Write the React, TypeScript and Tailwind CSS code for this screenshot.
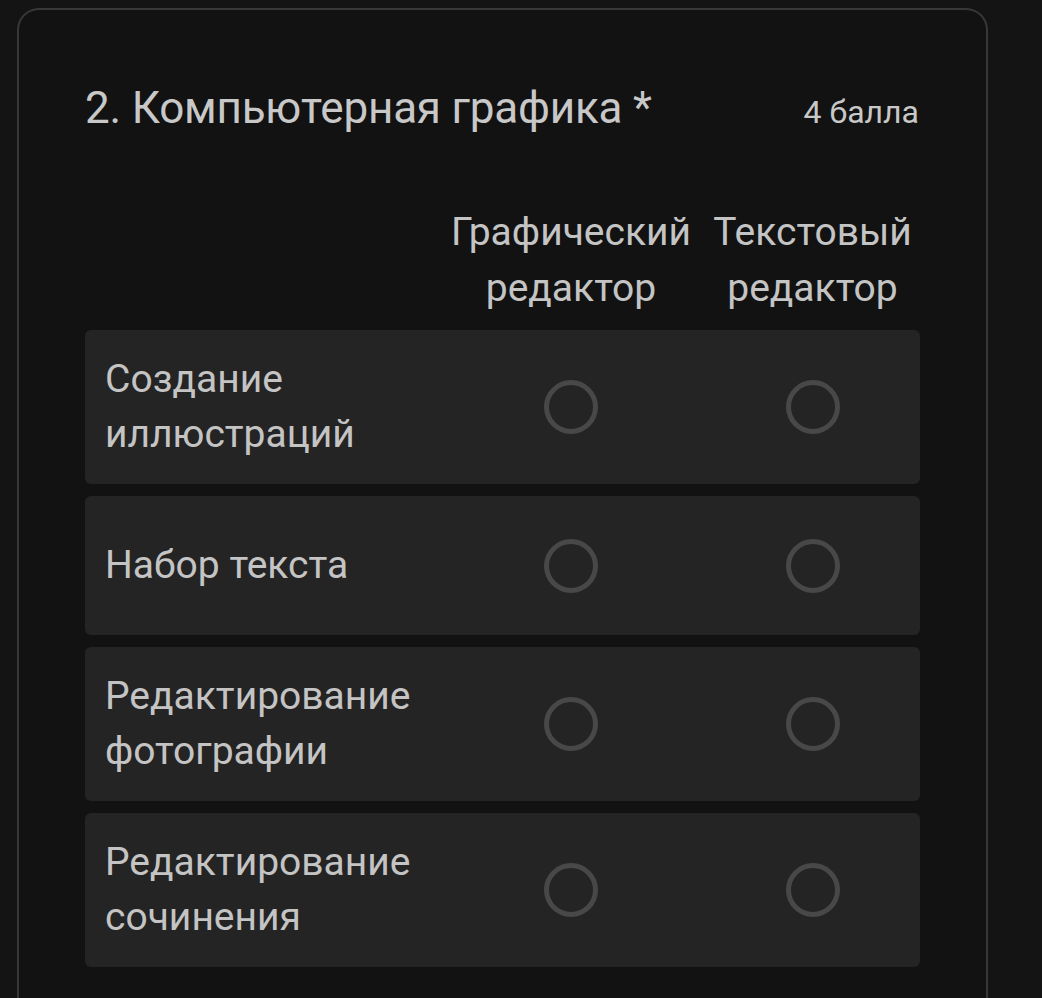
import { ReactNode } from "react";

const rows = [
  "Создание иллюстраций",
  "Набор текста",
  "Редактирование фотографии",
  "Редактирование сочинения",
];

function Radio() {
  return (
    <span className="block w-[54px] h-[54px] rounded-full border-[5px] border-[#484848]" />
  );
}

function Cell({ children, last }: { children: ReactNode; last?: boolean }) {
  return (
    <div className={`flex justify-center ${last ? "pl-3" : ""}`}>{children}</div>
  );
}

export default function App() {
  return (
    <div
      className="min-h-[998px] bg-[#141414] pt-2 px-[17px] overflow-hidden"
      style={{ fontFamily: "Roboto, 'Noto Sans', sans-serif" }}
    >
      <div className="w-[971px] min-h-[1000px] rounded-t-[22px] border-2 border-b-0 border-[#383838] bg-[#121212] pl-[66px] pr-[65px] pt-[70px]">
        {/* Title */}
        <div className="flex items-baseline justify-between">
          <h2 className="text-[44px] leading-[56px] text-[#c8c8c8] tracking-[-0.2px]">
            2. Компьютерная графика *
          </h2>
          <span className="text-[32px] text-[#c8c8c8] pr-[2px]">4 балла</span>
        </div>

        {/* Column headers */}
        <div className="mt-[68px] grid grid-cols-[365px_242px_229px] text-[39px] leading-[56px] text-[#c4c4c4] text-center">
          <div />
          <div className="whitespace-nowrap">
            Графический
            <br />
            редактор
          </div>
          <div className="pl-3 whitespace-nowrap">
            Текстовый
            <br />
            редактор
          </div>
        </div>

        {/* Rows */}
        <div className="mt-[14px] flex flex-col gap-3 w-[835px]">
          {rows.map((r) => (
            <div
              key={r}
              className="grid grid-cols-[365px_242px_229px] items-center rounded-md bg-[#242424] min-h-[139px] py-[22px]"
            >
              <div className="pl-5 pr-4 text-[39px] leading-[55px] text-[#c4c4c4]">{r}</div>
              <Cell>
                <Radio />
              </Cell>
              <Cell last>
                <Radio />
              </Cell>
            </div>
          ))}
        </div>
      </div>
    </div>
  );
}
